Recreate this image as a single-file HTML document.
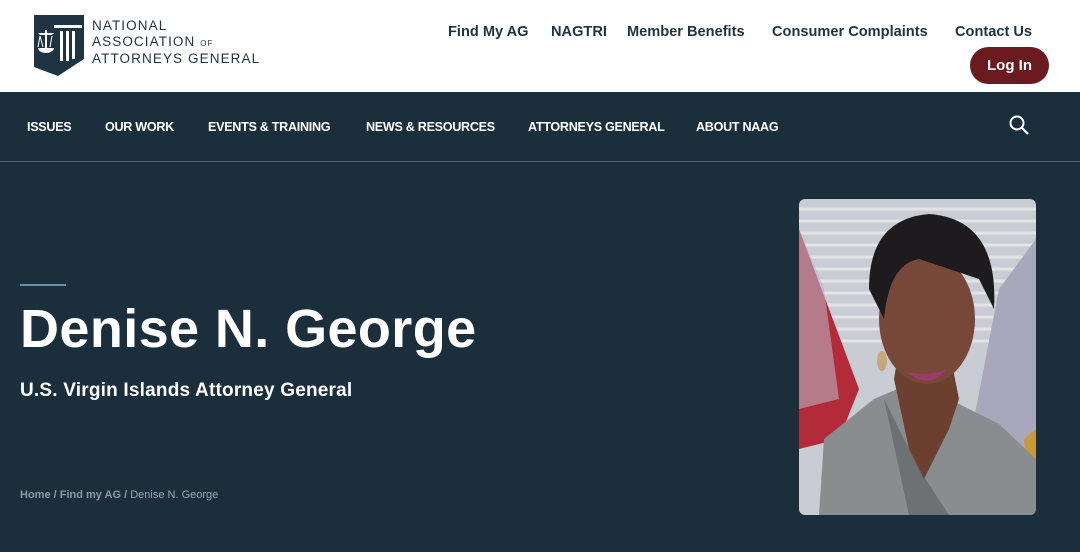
<!DOCTYPE html>
<html><head><style>
body{margin:0;width:1080px;height:552px;overflow:hidden;background:#1b2e3c;font-family:"Liberation Sans",sans-serif;}
.top{position:absolute;left:0;top:0;width:1080px;height:92px;background:#fff;}
.logo{position:absolute;left:34px;top:15px;}
.lt{position:absolute;left:92px;top:18px;color:#1f3442;font-size:13.5px;letter-spacing:1.1px;line-height:15.5px;}
.tl{position:absolute;top:24px;font-size:14.6px;font-weight:bold;color:#1f3442;}
.login{position:absolute;left:970px;top:47px;width:79px;height:37px;border-radius:19px;background:#6b1a1f;color:#fff;font-weight:bold;font-size:15px;text-align:center;line-height:37px;}
.nav{position:absolute;top:92px;left:0;width:1080px;height:69px;border-bottom:1px solid #4d6170;}
.nav span{position:absolute;top:28px;color:#fff;font-size:12.6px;font-weight:bold;letter-spacing:-0.3px;}
.hr{position:absolute;left:20px;top:284px;width:46px;height:2px;background:#6f8ca3;}
h1{position:absolute;left:20px;top:298px;margin:0;color:#fff;font-size:54px;font-weight:bold;letter-spacing:0.4px;}
.sub{position:absolute;left:20px;top:380px;color:#fff;font-size:19px;font-weight:bold;letter-spacing:0.2px;}
.bc{position:absolute;left:20px;top:489px;color:#9aa7b1;font-size:11px;}
.bc b{color:#8b99a5}
.photo{position:absolute;left:799px;top:199px;width:237px;height:316px;border-radius:6px;overflow:hidden;}
</style></head><body>
<div class="top">
<svg class="logo" width="50" height="61" viewBox="0 0 50 61"><path d="M0 0H50V44L24 61L0 52Z" fill="#1f3442"/><g fill="#fff"><rect x="20" y="10" width="28" height="3"/><rect x="26" y="16" width="3" height="30"/><rect x="32" y="16" width="3" height="30"/><rect x="38" y="16" width="3" height="28"/><rect x="11" y="15" width="2" height="20"/><path d="M4 33H20A8 5 0 0 1 4 33Z"/><path d="M6 20H18L20 18H4Z"/></g><path d="M6 21L4 32M6 21L9 32M18 21L16 32" stroke="#fff" stroke-width="1"/></svg>
<div class="lt">NATIONAL<br>ASSOCIATION <span style="font-size:8px">OF</span><br>ATTORNEYS GENERAL</div>
<div class="tl" style="left:448px">Find My AG</div>
<div class="tl" style="left:551px">NAGTRI</div>
<div class="tl" style="left:627px">Member Benefits</div>
<div class="tl" style="left:772px">Consumer Complaints</div>
<div class="tl" style="left:955px">Contact Us</div>
<div class="login">Log In</div>
</div>
<div class="nav">
<span style="left:27px">ISSUES</span><span style="left:105px">OUR WORK</span><span style="left:208px">EVENTS &amp; TRAINING</span><span style="left:366px">NEWS &amp; RESOURCES</span><span style="left:528px">ATTORNEYS GENERAL</span><span style="left:696px">ABOUT NAAG</span>
<svg style="position:absolute;left:1009px;top:23px" width="20" height="20" viewBox="0 0 20 20"><circle cx="8" cy="8" r="6.5" fill="none" stroke="#fff" stroke-width="2"/><path d="M13 13L19 19" stroke="#fff" stroke-width="2.2"/></svg>
</div>
<div class="hr"></div>
<h1>Denise N. George</h1>
<div class="sub">U.S. Virgin Islands Attorney General</div>
<div class="bc"><b>Home / Find my AG /</b> Denise N. George</div>
<svg class="photo" viewBox="0 0 237 316">
<rect width="237" height="316" fill="#c9ccd2"/>
<g stroke="#e2e4e8" stroke-width="3"><path d="M0 10H237M0 22H237M0 34H237M0 46H237M0 58H237M0 70H237M0 82H237M0 94H237M0 106H237M0 118H237M0 130H237M0 142H237"/></g>
<path d="M0 30L60 190L40 240L0 250Z" fill="#b32a38"/>
<path d="M0 30L25 90L40 200L0 210Z" fill="#b7b3bf" opacity=".6"/>
<path d="M237 40L200 90L175 220L230 260L237 250Z" fill="#a9a7bc"/>
<path d="M225 240L237 230V280L228 270Z" fill="#c99a3a"/>
<path d="M20 316L25 240L75 200L110 185L150 200L200 225L237 260V316Z" fill="#8a8d90"/>
<path d="M85 200L120 270L150 316H110Z" fill="#6e7174"/>
<path d="M95 180L110 250L125 280L150 230L160 200L150 150L100 150Z" fill="#6b4030"/>
<ellipse cx="128" cy="120" rx="48" ry="65" fill="#77483a"/>
<path d="M70 90Q70 20 130 15Q200 20 195 110L180 80Q150 70 120 60Q90 65 85 120Z" fill="#1d1b1e"/>
<path d="M108 173Q130 178 148 170Q130 192 108 173Z" fill="#9b3b6a"/>
<ellipse cx="83" cy="162" rx="5" ry="10" fill="#c6a77a"/>
</svg>
</body></html>
